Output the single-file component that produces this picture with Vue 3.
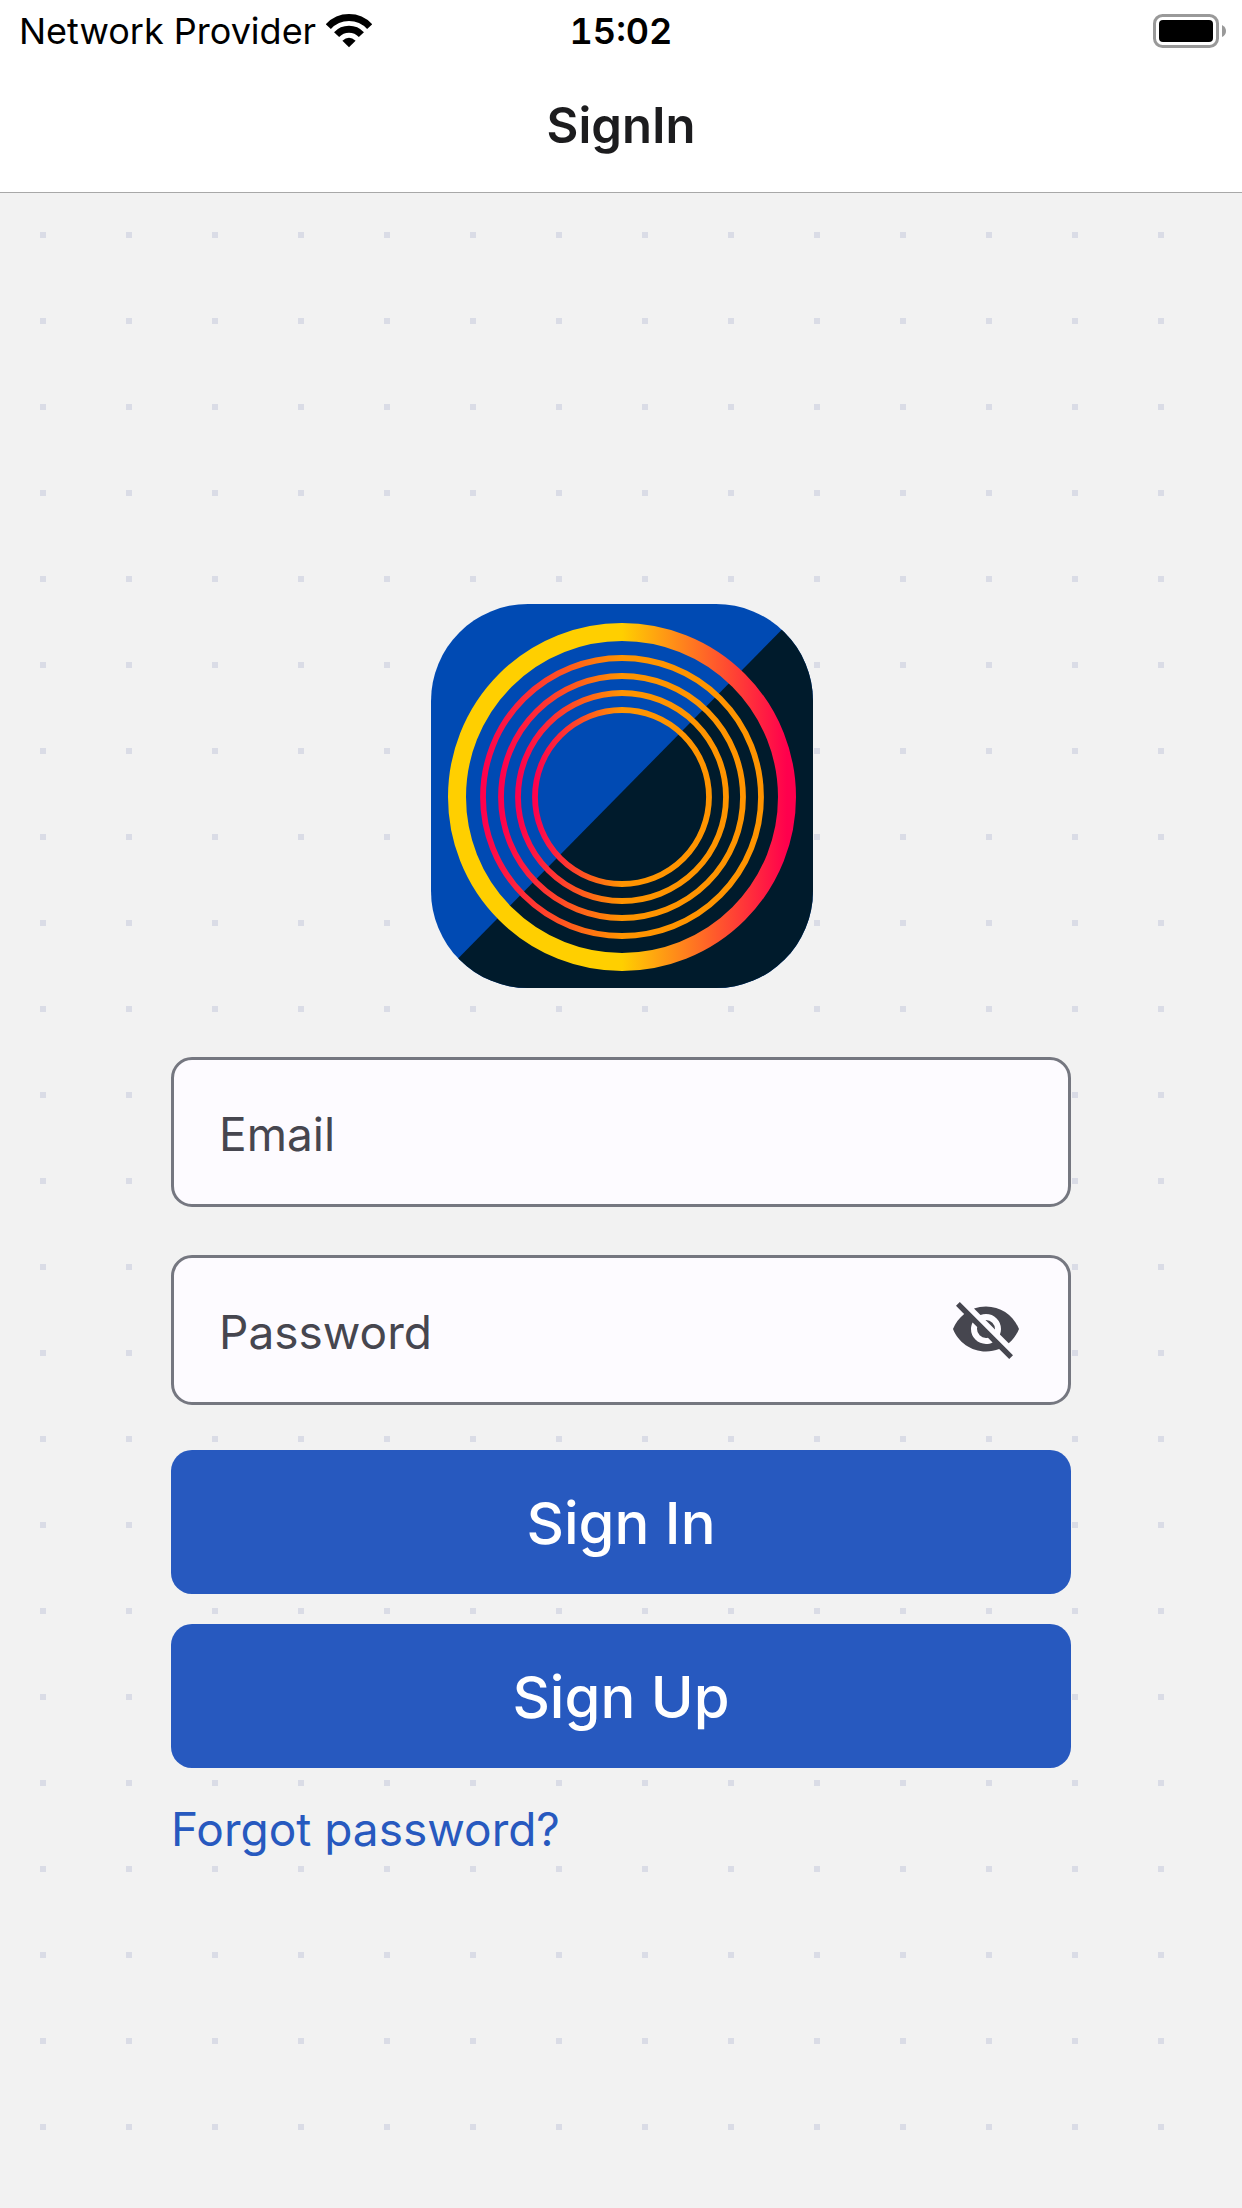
<script setup>
import { ref } from 'vue'

const email = ref('')
const password = ref('')
const showPassword = ref(false)

// radii of the thin rings inside the logo
const rings = [139, 121, 104, 87]
</script>

<template>
  <div class="screen">
    <header class="top">
      <div class="status-bar">
        <div class="network">
          <span>Network Provider</span>
          <svg class="wifi" viewBox="0 0 46 34" aria-hidden="true">
            <path d="M2.3 12.7A28 28 0 0 1 43.7 12.7" />
            <path d="M10.6 20.6A17 17 0 0 1 35.4 20.6" />
            <path class="wifi-dot" d="M16.4 26.8Q23 20.6 29.6 26.8L23 33.2Z" />
          </svg>
        </div>
        <time class="clock">15:02</time>
        <svg class="battery" viewBox="0 0 74 34" aria-hidden="true">
          <rect x="1.5" y="1.5" width="63" height="31" rx="8" fill="none" stroke="#999" stroke-width="3" />
          <rect x="6" y="6" width="54" height="22" rx="4" fill="#000" />
          <path d="M69 11Q73 13 73 17T69 23Z" fill="#999" />
        </svg>
      </div>
      <h1 class="title">SignIn</h1>
    </header>

    <main class="content">
      <svg class="logo" viewBox="0 0 384 384" role="img" aria-label="Logo">
        <defs>
          <clipPath id="logo-shape">
            <rect x="2" y="0" width="382" height="384" rx="97" />
          </clipPath>
          <linearGradient id="outer-ring">
            <stop offset="0.5" stop-color="#ffcf00" />
            <stop offset="1" stop-color="#ff004d" />
          </linearGradient>
          <linearGradient id="inner-ring">
            <stop offset="0" stop-color="#ff004d" />
            <stop offset="0.5" stop-color="#ff9400" />
          </linearGradient>
        </defs>
        <g clip-path="url(#logo-shape)">
          <rect width="384" height="384" fill="#004ab3" />
          <path d="M0 384L384 -6V384Z" fill="#001b2c" />
        </g>
        <circle cx="193" cy="193" r="165" fill="none" stroke="url(#outer-ring)" stroke-width="18" />
        <circle
          v-for="r in rings"
          :key="r"
          cx="193"
          cy="193"
          :r="r"
          fill="none"
          stroke="url(#inner-ring)"
          stroke-width="5.8"
        />
      </svg>

      <form class="form" @submit.prevent>
        <div class="field">
          <input id="email" v-model="email" type="email" placeholder=" " autocomplete="email" />
          <label for="email">Email</label>
        </div>
        <div class="field">
          <input
            id="password"
            v-model="password"
            :type="showPassword ? 'text' : 'password'"
            placeholder=" "
            autocomplete="current-password"
          />
          <label for="password">Password</label>
          <button
            type="button"
            class="eye"
            aria-label="Show password"
            :aria-pressed="showPassword"
            @click="showPassword = !showPassword"
          >
            <svg viewBox="0 0 24 24" aria-hidden="true">
              <path
                d="M11.83,9L15,12.16C15,12.11 15,12.05 15,12A3,3 0 0,0 12,9C11.94,9 11.89,9 11.83,9M7.53,9.8L9.08,11.35C9.03,11.56 9,11.77 9,12A3,3 0 0,0 12,15C12.22,15 12.44,14.97 12.65,14.92L14.2,16.47C13.53,16.8 12.79,17 12,17A5,5 0 0,1 7,12C7,11.21 7.2,10.47 7.53,9.8M2,4.27L4.28,6.55L4.73,7C3.08,8.3 1.78,10 1,12C2.73,16.39 7,19.5 12,19.5C13.55,19.5 15.03,19.2 16.38,18.66L16.81,19.08L19.73,22L21,20.73L3.27,3M12,7A5,5 0 0,1 17,12C17,12.64 16.87,13.26 16.64,13.82L19.57,16.75C21.07,15.5 22.27,13.86 23,12C21.27,7.61 17,4.5 12,4.5C10.6,4.5 9.26,4.75 8,5.2L10.17,7.35C10.74,7.13 11.35,7 12,7Z"
              />
            </svg>
          </button>
        </div>
        <div class="actions">
          <button type="submit" class="btn">Sign In</button>
          <button type="button" class="btn">Sign Up</button>
        </div>
        <a class="forgot" href="#">Forgot password?</a>
      </form>
    </main>
  </div>
</template>

<style>
body {
  margin: 0;
  background: #f2f2f2;
}
</style>

<style scoped>
.screen {
  min-height: 100vh;
  display: flex;
  flex-direction: column;
  font-family: Inter, 'Liberation Sans', sans-serif;
}

.top {
  position: relative;
  background: #fff;
  box-shadow: 0 1px 0 #a8a8a8;
}

.status-bar {
  display: grid;
  grid-template-columns: 1fr auto 1fr;
  align-items: center;
  box-sizing: border-box;
  height: 60px;
  padding: 2px 15px 0;
  color: #000;
  font-size: 36px;
  line-height: 58px;
}

.network {
  display: flex;
  align-items: center;
  gap: 10px;
  padding-left: 4px;
}

.wifi {
  width: 46px;
  height: 34px;
  fill: none;
  stroke: #000;
  stroke-width: 7;
}

.wifi .wifi-dot {
  fill: #000;
  stroke: none;
}

.clock {
  font-weight: 600;
  font-variant-numeric: tabular-nums;
}

.battery {
  width: 74px;
  height: 34px;
  justify-self: end;
}

.title {
  margin: 0;
  color: #1c1c1e;
  font-size: 49px;
  font-weight: 600;
  line-height: 132px;
  text-align: center;
}

.content {
  flex: 1;
  display: flex;
  flex-direction: column;
  align-items: center;
  gap: 69px;
  padding: 412px 171px 100px;
  background-color: #f2f2f2;
  /* one 6px dot per 86px tile */
  background-image: url("data:image/svg+xml,%3Csvg xmlns='http://www.w3.org/2000/svg' width='86' height='86'%3E%3Crect x='40' y='40' width='6' height='6' fill='%23dadce6'/%3E%3C/svg%3E");
}

.logo {
  width: 384px;
  height: 384px;
}

.form {
  width: 100%;
  display: flex;
  flex-direction: column;
  align-items: stretch;
}

.field {
  position: relative;
  margin-bottom: 48px;
}

.field input {
  display: block;
  box-sizing: border-box;
  width: 100%;
  height: 150px;
  padding: 0 136px 0 45px;
  border: 3px solid #757780;
  border-radius: 21px;
  background: #fdfbff;
  color: #1b1b1f;
  font: inherit;
  font-size: 46px;
  outline: none;
}

.field input:focus {
  border-color: #2759bf;
}

.field label {
  position: absolute;
  top: 0;
  left: 48px;
  color: #46464f;
  font-size: 46px;
  line-height: 154px;
  pointer-events: none;
}

/* label moves onto the border once the field is in use */
.field input:focus + label,
.field input:not(:placeholder-shown) + label {
  top: -24px;
  padding: 0 12px;
  background: #fdfbff;
  font-size: 36px;
  line-height: 48px;
}

.eye {
  position: absolute;
  top: 38px;
  right: 49px;
  width: 72px;
  height: 72px;
  padding: 0;
  border: none;
  background: none;
  cursor: pointer;
}

.eye svg {
  display: block;
  fill: #46464f;
}

.actions {
  display: flex;
  flex-direction: column;
  gap: 30px;
  margin-top: -3px;
}

.btn {
  height: 144px;
  padding: 2px 0 0;
  border: none;
  border-radius: 21px;
  background: #2759bf;
  color: #fff;
  font: inherit;
  font-size: 58px;
  font-weight: 500;
  cursor: pointer;
}

.btn:hover {
  background: #1f4ba5;
}

.forgot {
  align-self: flex-start;
  margin-top: 31px;
  color: #2759bf;
  font-size: 46px;
  line-height: 60px;
  text-decoration: none;
}
</style>
